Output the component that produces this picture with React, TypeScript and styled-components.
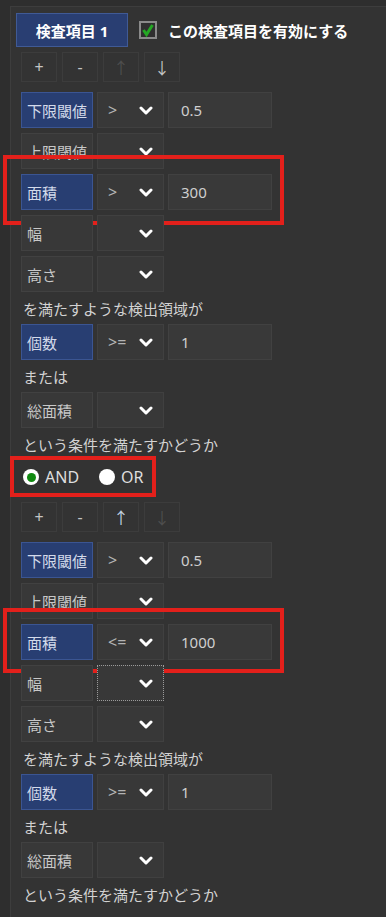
import React, { FC } from 'react';
import styled, { createGlobalStyle } from 'styled-components';

const GlobalStyle = createGlobalStyle`
  body {
    margin: 0;
    background: #2e2e2e;
    font-family: "Noto Sans", "Noto Sans CJK JP", sans-serif;
  }
`;

const Panel = styled.div`
  margin: 6px 0 0 10px;
  min-height: 911px;
  box-sizing: border-box;
  background: #333333;
  border-top: 1px solid #3d3d3d;
  border-left: 1px solid #3d3d3d;
  padding: 6px 0 0 5px;
`;

const Header = styled.div`
  display: flex;
  align-items: center;
  gap: 11px;
  height: 34px;
`;

const ItemButton = styled.div`
  width: 112px;
  height: 34px;
  box-sizing: border-box;
  display: flex;
  align-items: center;
  justify-content: center;
  background: #293e72;
  border: 1px solid #405a95;
  color: #ffffff;
  font-weight: bold;
  font-size: 15px;
`;

const EnableLabel = styled.label`
  display: flex;
  align-items: center;
  gap: 11px;
  color: #ffffff;
  font-weight: bold;
  font-size: 15px;
`;

const Group = styled.div`
  display: flex;
  flex-direction: column;
  padding-left: 5px;
`;

const ToolRow = styled.div<{ $top: number }>`
  display: flex;
  gap: 5px;
  margin-top: ${p => p.$top}px;
  margin-bottom: 10px;
`;

const ToolButton = styled.div<{ $disabled?: boolean; $accent?: boolean }>`
  width: 36px;
  height: 30px;
  box-sizing: border-box;
  border: 1px solid #3c3c3c;
  background: #333333;
  display: flex;
  align-items: center;
  justify-content: center;
  font-size: 16px;
  color: ${p => (p.$disabled ? '#4e4e4e' : p.$accent ? '#c2d2e2' : '#c4c4c4')};
`;

const Rows = styled.div`
  display: flex;
  flex-direction: column;
  gap: 5px;
`;

const Row = styled.div`
  display: flex;
  gap: 4px;
  height: 36px;
  width: fit-content;
  position: relative;
`;

const LabelBox = styled.div<{ $active?: boolean }>`
  width: 72px;
  box-sizing: border-box;
  display: flex;
  align-items: center;
  padding-left: 5px;
  font-size: 15px;
  background: ${p => (p.$active ? '#283e72' : '#383838')};
  border: 1px solid ${p => (p.$active ? '#3b5592' : '#414141')};
  color: ${p => (p.$active ? '#d3daea' : '#c8c8c8')};
`;

const SelectBox = styled.div<{ $focus?: boolean }>`
  width: 67px;
  box-sizing: border-box;
  display: flex;
  align-items: center;
  justify-content: space-between;
  padding: 0 10px 0 10px;
  background: #383838;
  border: 1px ${p => (p.$focus ? 'dotted #9a9a9a' : 'solid #404040')};
  color: #b4b4b4;
  font-size: 16px;
`;

const InputBox = styled.div`
  width: 104px;
  box-sizing: border-box;
  display: flex;
  align-items: center;
  padding-left: 12px;
  background: #393939;
  border: 1px solid #414141;
  color: #cfcfcf;
  font-size: 15px;
`;

const Caption = styled.div`
  height: 22px;
  margin: 5px 0;
  padding-left: 2px;
  display: flex;
  align-items: center;
  color: #d2d2d2;
  font-size: 15px;
`;

const Marker = styled.div<{ $t: number; $b: number; $l: number; $r: number }>`
  position: absolute;
  top: ${p => p.$t}px;
  bottom: ${p => p.$b}px;
  left: ${p => p.$l}px;
  right: ${p => p.$r}px;
  border: 4px solid #e3201b;
  pointer-events: none;
`;

const RadioGroup = styled.div`
  position: relative;
  display: flex;
  align-items: center;
  gap: 20px;
  height: 42px;
  margin-top: -4px;
  padding-left: 2px;
  width: fit-content;
`;

const RadioItem = styled.label`
  display: flex;
  align-items: center;
  gap: 6px;
  color: #dedede;
  font-size: 16px;
`;

const RadioDot = styled.span<{ $checked?: boolean }>`
  width: 16px;
  height: 16px;
  border-radius: 50%;
  background: #ffffff;
  display: flex;
  align-items: center;
  justify-content: center;
  &::after {
    content: '';
    width: 9px;
    height: 9px;
    border-radius: 50%;
    background: ${p => (p.$checked ? '#118a11' : 'transparent')};
  }
`;

const Chevron: FC = () => (
  <svg width="14" height="9" viewBox="0 0 14 9">
    <polyline points="2,2 7,7 12,2" fill="none" stroke="#ffffff" strokeWidth="3" strokeLinecap="round" strokeLinejoin="round" />
  </svg>
);

const CheckIcon: FC = () => (
  <svg width="18" height="18" viewBox="0 0 18 18">
    <rect x="1" y="1" width="16" height="16" fill="#2f2f2f" stroke="#8a8a8a" strokeWidth="2" />
    <polyline points="4.5,9 7.5,13.5 13.5,4" fill="none" stroke="#24a824" strokeWidth="3" />
  </svg>
);

type Cond = { label: string; active?: boolean; op?: string; value?: string; focus?: boolean };

const CondRow: FC<{ c: Cond; children?: React.ReactNode }> = ({ c, children }) => (
  <Row>
    <LabelBox $active={c.active}>{c.label}</LabelBox>
    <SelectBox $focus={c.focus}>
      <span>{c.op ?? ''}</span>
      <Chevron />
    </SelectBox>
    {c.value !== undefined && <InputBox>{c.value}</InputBox>}
    {children}
  </Row>
);

const ConditionGroup: FC<{ toolTop: number; upDisabled: boolean; downDisabled: boolean; areaOp: string; areaValue: string; marker: [number, number]; focusWidth?: boolean }> = props => {
  const rows: Cond[] = [
    { label: '下限閾値', active: true, op: '>', value: '0.5' },
    { label: '上限閾値' },
    { label: '面積', active: true, op: props.areaOp, value: props.areaValue },
    { label: '幅', focus: props.focusWidth },
    { label: '高さ' },
  ];
  return (
    <>
      <ToolRow $top={props.toolTop}>
        <ToolButton>+</ToolButton>
        <ToolButton>-</ToolButton>
        <ToolButton $disabled={props.upDisabled} $accent={!props.upDisabled}>↑</ToolButton>
        <ToolButton $disabled={props.downDisabled}>↓</ToolButton>
      </ToolRow>
      <Rows>
        {rows.map(r => (
          <CondRow key={r.label} c={r}>
            {r.label === '面積' && <Marker $t={props.marker[0]} $b={props.marker[1]} $l={-18} $r={-12} />}
          </CondRow>
        ))}
      </Rows>
      <Caption>を満たすような検出領域が</Caption>
      <CondRow c={{ label: '個数', active: true, op: '>=', value: '1' }} />
      <Caption>または</Caption>
      <CondRow c={{ label: '総面積' }} />
      <Caption>という条件を満たすかどうか</Caption>
    </>
  );
};

const App: FC = () => {
  return (
    <>
      <GlobalStyle />
      <Panel>
        <Header>
          <ItemButton>検査項目 1</ItemButton>
          <EnableLabel>
            <CheckIcon />
            この検査項目を有効にする
          </EnableLabel>
        </Header>
        <Group>
          <ConditionGroup toolTop={5} upDisabled downDisabled={false} areaOp=">" areaValue="300" marker={[-19, -15]} />
          <RadioGroup>
            <RadioItem>
              <RadioDot $checked />
              AND
            </RadioItem>
            <RadioItem>
              <RadioDot />
              OR
            </RadioItem>
            <Marker $t={0} $b={1} $l={-11} $r={-12} />
          </RadioGroup>
          <ConditionGroup toolTop={4} upDisabled={false} downDisabled areaOp="<=" areaValue="1000" marker={[-16, -13]} focusWidth />
        </Group>
      </Panel>
    </>
  );
};

export default App;
